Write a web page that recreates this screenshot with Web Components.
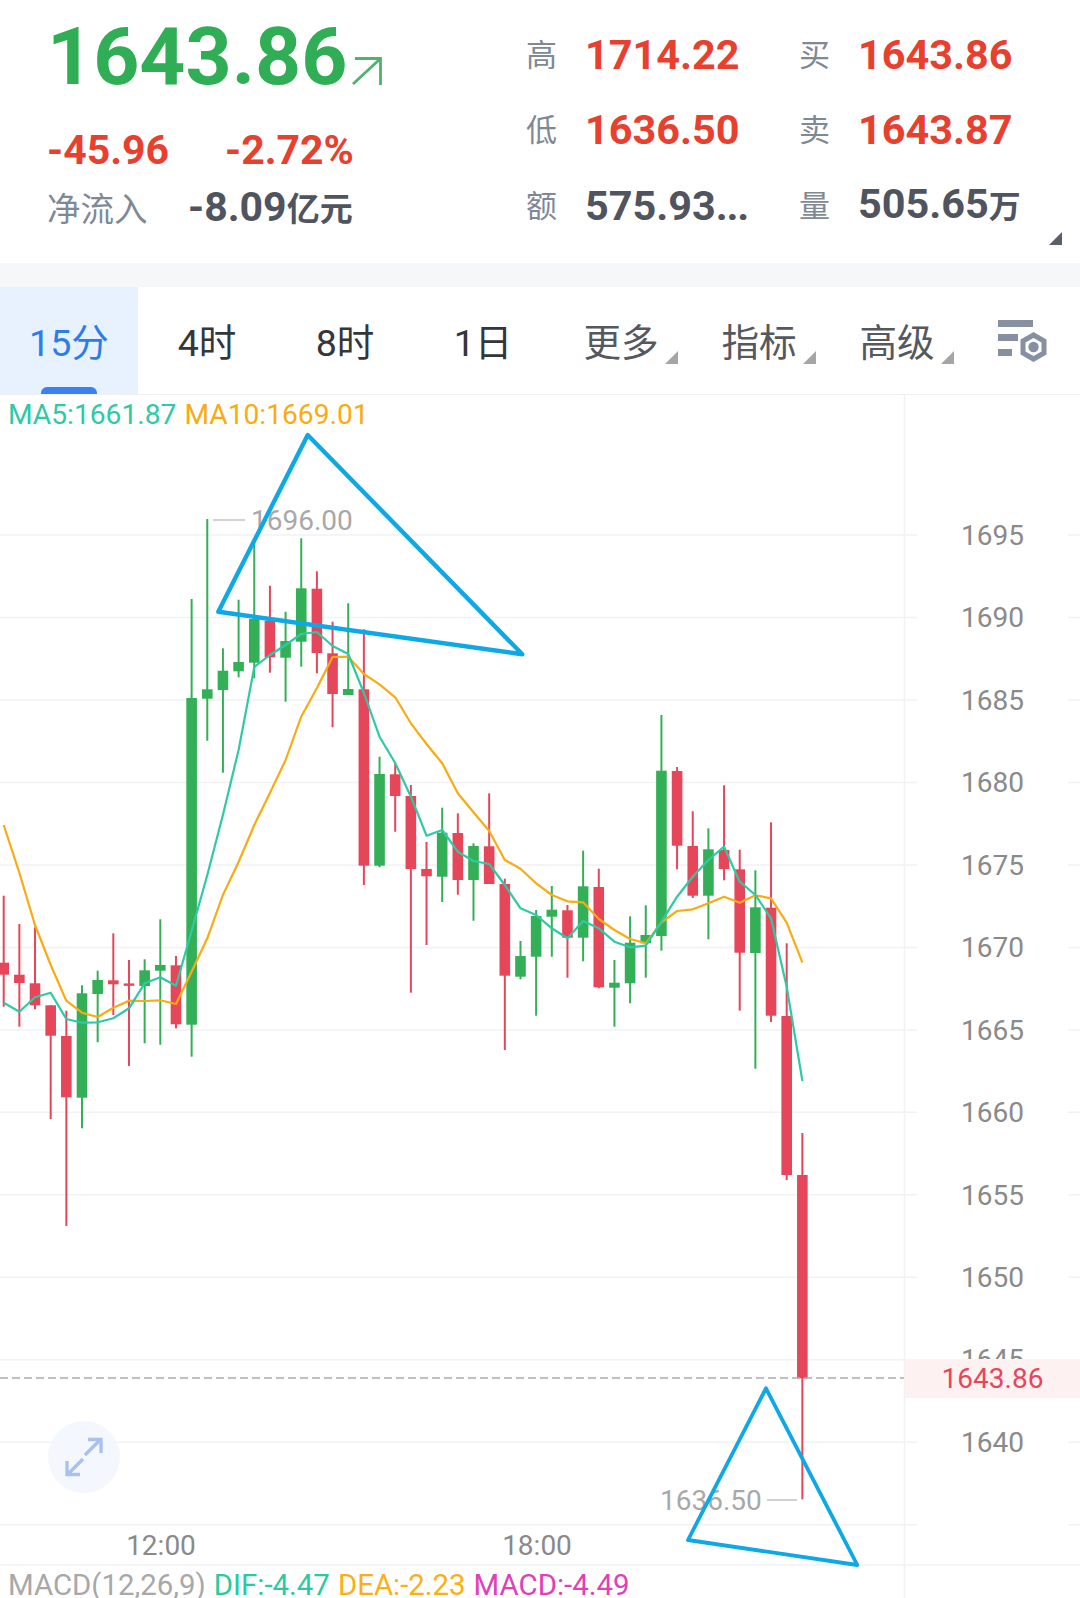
<!DOCTYPE html>
<html lang="zh">
<head>
<meta charset="utf-8">
<title>K线</title>
<style>
  html, body { margin: 0; background: #fff; }
  body { width: 1080px; height: 1598px; overflow: hidden; font-family: Roboto, "Noto Sans CJK SC", sans-serif; }
</style>
</head>
<body>
<stock-quote></stock-quote>
<div style="height:24px;background:#f6f7f9"></div>
<period-tabs></period-tabs>
<kline-chart></kline-chart>

<script>
const RED = '#e6465a'
const GREEN = '#33b057'
const TEAL = '#2ec9a5'
const ORANGE = '#f9ab12'

// one cell of the stats block: label + value
class QuoteStat extends HTMLElement {
  constructor() {
    super()
    this.attachShadow({mode: 'open'}).innerHTML = `
      <style>
        :host { display: flex; align-items: center; height: 75.5px; }
        .label { width: 59px; flex: none; margin-top: -5px; font: 400 31px "Noto Sans CJK SC", sans-serif; color: #7f8995; }
        .value { font: 700 41.4px/50px Roboto, "Noto Sans CJK SC", sans-serif; color: var(--value-color, #50545e); white-space: nowrap; }
        ::slotted(.unit) { font-size: 32px; }
        ::slotted(.dots) { letter-spacing: -1.2px; }
      </style>
      <span class="label">${this.getAttribute('label')}</span>
      <span class="value"><slot></slot></span>`
  }
}

class StockQuote extends HTMLElement {
  constructor() {
    super()
    this.attachShadow({mode: 'open'}).innerHTML = `
      <style>
        :host { display: grid; grid-template-columns: 526px 1fr; height: 263px; position: relative; }
        .left { padding-left: 47px; }
        .price { display: flex; align-items: flex-end; height: 113px; font: 700 80.5px/113px Roboto, sans-serif; color: #2fae55; }
        .price svg { margin: 0 0 28px 5px; }
        .change { display: flex; height: 74px; align-items: center; font: 700 41px Roboto, sans-serif; color: #e8402f; }
        .change span:first-child { width: 178px; }
        .flow { display: flex; height: 42px; align-items: center; }
        .flow .label { width: 141px; margin-top: -4px; font: 400 33.5px "Noto Sans CJK SC", sans-serif; color: #7f8995; }
        .flow .value { font: 700 41px/50px Roboto, "Noto Sans CJK SC", sans-serif; color: #50545e; white-space: nowrap; }
        .flow .unit { font-size: 33px; }
        .right { display: grid; grid-template-columns: 273px 1fr; align-content: start; padding-top: 17px; --red: #e8402f; }
        .red { --value-color: var(--red); }
        .corner { position: absolute; right: 18px; top: 232px; width: 0; height: 0; border-style: solid; border-width: 0 0 13px 13px; border-color: transparent transparent #5a5f68 transparent; }
      </style>
      <div class="left">
        <div class="price">1643.86
          <svg width="30" height="28" viewBox="0 0 30 28" fill="none" stroke="#4fb26d" stroke-width="2.8"><path d="M1 27 L28 2 M3 1.5 H28.5 V28"/></svg>
        </div>
        <div class="change"><span>-45.96</span><span>-2.72%</span></div>
        <div class="flow"><span class="label">净流入</span><span class="value">-8.09<span class="unit">亿元</span></span></div>
      </div>
      <div class="right">
        <quote-stat class="red" label="高">1714.22</quote-stat>
        <quote-stat class="red" label="买">1643.86</quote-stat>
        <quote-stat class="red" label="低">1636.50</quote-stat>
        <quote-stat class="red" label="卖">1643.87</quote-stat>
        <quote-stat label="额">575.93<span class="dots">...</span></quote-stat>
        <quote-stat label="量">505.65<span class="unit">万</span></quote-stat>
      </div>
      <div class="corner"></div>`
  }
}

class PeriodTab extends HTMLElement {
  constructor() {
    super()
    this.attachShadow({mode: 'open'}).innerHTML = `
      <style>
        :host { display: flex; align-items: center; justify-content: center; position: relative; color: #33363a; font: 400 37.6px Roboto, "Noto Sans CJK SC", sans-serif; }
        :host([active]) { background: #e8f1fe; color: #2b7de9; }
        :host([menu]) { color: #55595f; }
        :host([active])::after { content: ""; position: absolute; left: 41px; bottom: 0; width: 56px; height: 7px; border-radius: 6px 6px 0 0; background: #3b82f0; }
        :host([menu])::after { content: ""; position: absolute; right: 12px; bottom: 30px; width: 0; height: 0; border-style: solid; border-width: 0 0 13px 13px; border-color: transparent transparent #a5a5a5 transparent; }
        span { position: relative; top: -1px; }
      </style>
      <span><slot></slot></span>`
  }
}

class PeriodTabs extends HTMLElement {
  constructor() {
    super()
    this.attachShadow({mode: 'open'}).innerHTML = `
      <style>
        :host { display: grid; grid-template-columns: repeat(7, 138px) 1fr; height: 107px; border-bottom: 1px solid #eeeff1; }
        .icon { display: flex; align-items: center; justify-content: center; }
      </style>
      <period-tab active>15分</period-tab>
      <period-tab>4时</period-tab>
      <period-tab>8时</period-tab>
      <period-tab>1日</period-tab>
      <period-tab menu>更多</period-tab>
      <period-tab menu>指标</period-tab>
      <period-tab menu>高级</period-tab>
      <div class="icon">
        <svg width="54" height="44" viewBox="0 0 54 44" fill="#8790a0">
          <rect x="2" y="1" width="35" height="7"/>
          <rect x="2" y="15" width="20" height="7"/>
          <rect x="2" y="30" width="14" height="7"/>
          <path d="M37.5 13 L50.5 20.5 V35.5 L37.5 43 L24.5 35.5 V20.5 Z M37.5 19 L29.5 23.5 V32.5 L37.5 37 L45.5 32.5 V23.5 Z" fill-rule="evenodd"/>
          <circle cx="37.5" cy="28" r="5.2"/>
        </svg>
      </div>`
  }
}

// [colour, wick top, body top, body bottom, wick bottom], page y coordinates
const CANDLES = [
  ['r',895.7,962.7,974.7,1006.7],['r',924,974.7,983,1026.7],['r',927.3,983.3,1005.3,1009.3],['r',1005.3,1005.3,1035.7,1119],
  ['r',1010.7,1036,1097.3,1226],['g',985.3,993.3,1097.7,1128.3],['g',970.7,980,994,1042.3],['r',933.3,980.3,984.3,1015],
  ['r',960,983.4,985.8,1066],['g',959.3,970.3,986,1043.3],['g',919.3,965,970.7,1044.7],['r',956,965.3,1024.3,1028.3],
  ['g',599,698,1024.7,1056.7],['g',519,689.3,698.7,740.7],['g',648.3,670.7,690,772.7],['g',599.7,662,671.3,677.3],
  ['g',543.3,619,662.7,678.3],['r',585.7,620.7,657.3,672.7],['g',611.7,641,657.7,701.7],['g',538.3,588.3,641.7,666.7],
  ['r',571.3,588.7,653,673.3],['r',621.7,653.3,694,727.3],['g',603.3,689,695,695],['r',629.3,689.3,865.7,885],
  ['g',756.7,774,865.7,867.3],['r',763.3,774.3,796,831.7],['r',785,796,869,992.7],['r',842,869,876.3,945],
  ['g',807.7,832.7,876.7,902],['r',813.3,833,880,894.7],['g',843.3,846,880,920.7],['r',793.3,846.3,884,884],
  ['r',878.7,884,975.7,1050],['g',941,956,976.7,979.3],['g',910,916,956.7,1015.7],['g',886,909.7,916.7,956.7],
  ['r',905,910.3,937.7,977.7],['g',850.7,886.3,937.7,961.3],['r',868.7,887,987.3,988.3],['g',960,982.7,987.7,1026.7],
  ['g',916.3,942.7,983.3,1003.3],['g',905.3,935,943.3,977.7],['g',715,770.7,936,950.7],['r',767,771,845.7,869.3],
  ['r',811.3,846,895.7,898],['g',828.3,849.3,895.7,939.3],['r',785.3,850,869,880.3],['r',849.7,869.3,952.7,1010.7],
  ['g',870.3,907.3,953,1068.7],['r',822.3,907.7,1015.7,1022],['r',943.3,1016,1175,1180],['r',1133,1175,1378.3,1499.3],
]
const MA5 = [1002.7,1011.7,997.3,992.7,1019,1022.7,1022.3,1018.3,1008.3,983.3,977.3,985.7,931,875,815,750,667,655,645,634,632,646,654,693,736.7,763,796.7,835.7,830,851.7,861,864,885,908.3,915,928.3,938.3,921,928.3,941.7,947.3,945.7,921.7,896.7,876.7,860,846.7,881.7,895,918.3,986.7,1081]
const MA10 = [825,873,925,965,1000.7,1012.7,1017,1007.7,1000.7,1001,1000.3,1004,971.7,938.3,895,862,825,793,760,716.7,688,657,656.7,674,684.3,697.3,723.3,744,763.3,793.3,812.3,831,860,868.7,883.3,895,901.3,902.3,919,930,939,943.3,922.3,911,909.3,903.3,896.7,902.7,895.3,898.3,922.7,962.7]

const candleX = i => 3.7 + 15.66 * i
const gridY = k => 535 + 82.48 * k
const TOP = 395 // page y of the chart's first pixel

function maPoints(values) {
  return values.map((y, i) => candleX(i).toFixed(1) + ',' + y).join(' ')
}

function chartSvg() {
  let out = ''
  for (let k = 0; k <= 12; k++) {
    const y = gridY(k)
    out += `<path d="M0 ${y} H917 M1068 ${y} H1080" stroke="#f1f2f3" stroke-width="1.5"/>`
  }
  out += `<path d="M904.5 ${TOP} V1598" stroke="#f1f2f3" stroke-width="1.5"/>`
  out += `<path d="M0 1565 H1080" stroke="#f1f2f3" stroke-width="1.5"/>`
  CANDLES.forEach(([c, wt, bt, bb, wb], i) => {
    const x = candleX(i)
    const color = c == 'r' ? RED : GREEN
    out += `<rect x="${x - 1}" y="${wt}" width="2" height="${wb - wt}" fill="${color}"/>`
    out += `<rect x="${x - 5.3}" y="${bt}" width="10.6" height="${bb - bt}" fill="${color}"/>`
  })
  out += `<polyline points="${maPoints(MA10)}" fill="none" stroke="${ORANGE}" stroke-width="2.2" stroke-linejoin="round"/>`
  out += `<polyline points="${maPoints(MA5)}" fill="none" stroke="${TEAL}" stroke-width="2.2" stroke-linejoin="round"/>`
  out += `<path d="M0 1378 H904" stroke="#ababab" stroke-width="1.6" stroke-dasharray="8 4"/>`
  // high / low markers
  out += `<path d="M213 520 H245 M767 1500 H797" stroke="#c4c4c4" stroke-width="1.5"/>`
  return out
}

function priceTicks() {
  let out = ''
  for (let k = 0; k <= 11; k++) {
    // 1645 sits half under the last price label, only its top shows
    const style = k == 10 ? `top:${gridY(k) - TOP - 16.5}px;height:15.5px;overflow:hidden;transform:none;line-height:33px`
      : `top:${gridY(k) - TOP}px`
    out += `<span class="tick" style="${style}">${1695 - k * 5}</span>`
  }
  return out
}

class KlineChart extends HTMLElement {
  constructor() {
    super()
    this.attachShadow({mode: 'open'}).innerHTML = `
      <style>
        :host { display: block; position: relative; height: 1203px; overflow: hidden; font: 400 28px Roboto, sans-serif; }
        .plot { height: 1129px; }
        svg.layer { position: absolute; left: 0; top: 0; width: 1080px; height: 1203px; }
        .legend { position: absolute; left: 8px; top: 1px; display: flex; gap: 8px; white-space: nowrap; line-height: 38px; font-size: 28.2px; }
        .tick, .mark { position: absolute; transform: translateY(-50%); white-space: nowrap; }
        .tick { left: 905px; width: 175px; text-align: center; color: #8a8a8a; }
        .mark { color: #a8a8a8; }
        .last { position: absolute; left: 905px; top: 964px; width: 175px; height: 39px; line-height: 39px; text-align: center; background: #fdf1f1; color: ${RED}; }
        .expand { position: absolute; left: 48px; top: 1026px; width: 72px; height: 72px; border-radius: 50%; background: #f4f7fd; display: flex; align-items: center; justify-content: center; }
        .times { position: relative; height: 41px; display: grid; grid-template-columns: 322px 430px; }
        .times span { text-align: center; color: #8a8a8a; line-height: 43px; }
        .macd { position: relative; height: 33px; padding-left: 8px; display: flex; gap: 8px; white-space: nowrap; line-height: 41px; color: #a8a8a8; font-size: 29.4px; }
        .overlay { pointer-events: none; }
      </style>
      <svg class="layer" viewBox="0 ${TOP} 1080 1203">${chartSvg()}</svg>
      <div class="plot"></div>
      <div class="times"><span>12:00</span><span>18:00</span></div>
      <div class="macd">
        <span>MACD(12,26,9)</span>
        <span style="color:#2bc9a0">DIF:-4.47</span>
        <span style="color:#f9b016">DEA:-2.23</span>
        <span style="color:#e040b8">MACD:-4.49</span>
      </div>
      <div class="legend">
        <span style="color:${TEAL}">MA5:1661.87</span>
        <span style="color:${ORANGE}">MA10:1669.01</span>
      </div>
      ${priceTicks()}
      <span class="mark" style="left:251px;top:${520 - TOP}px">1696.00</span>
      <span class="mark" style="left:660px;top:${1500 - TOP}px">1636.50</span>
      <div class="last">1643.86</div>
      <div class="expand">
        <svg width="40" height="40" viewBox="0 0 40 40" fill="none" stroke="#a9c1ee" stroke-width="3.4">
          <path d="M21 18 L36 3 M24 2.5 H37 V16"/>
          <path d="M19 22 L4 37 M16 37.5 H3 V24"/>
        </svg>
      </div>
      <svg class="layer overlay" viewBox="0 ${TOP} 1080 1203" fill="none" stroke="#0ea8e6" stroke-linejoin="round">
        <path d="M307.7 435 L218.3 611.7 L522.3 654.3 Z" stroke-width="4.4"/>
        <path d="M766 1388.3 L688 1540 L857.3 1565 Z" stroke-width="3.8"/>
      </svg>`
  }
}

customElements.define('quote-stat', QuoteStat)
customElements.define('stock-quote', StockQuote)
customElements.define('period-tab', PeriodTab)
customElements.define('period-tabs', PeriodTabs)
customElements.define('kline-chart', KlineChart)
</script>
</body>
</html>
